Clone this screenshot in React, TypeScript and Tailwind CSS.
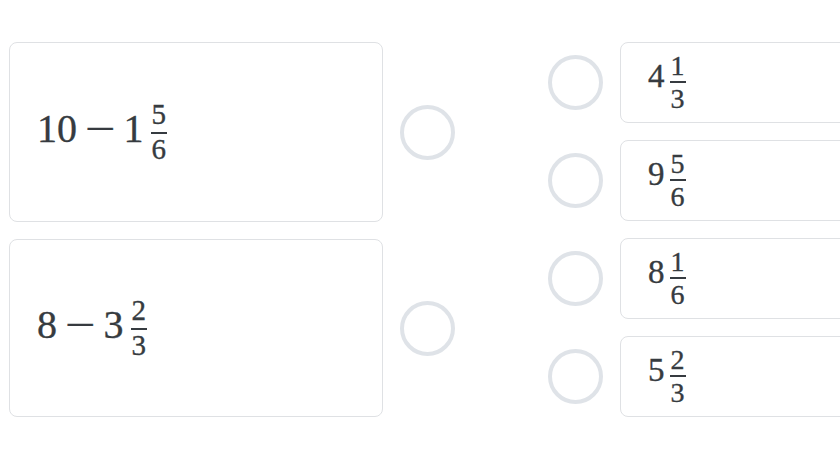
import React from "react";

const serifCls = "font-['Liberation_Serif','DejaVu_Serif',serif] [-webkit-text-stroke:0.35px_#363b40]";

function Frac({ n, d, size, numPad, denPad }: { n: string; d: string; size: string; numPad: string; denPad: string }) {
  return (
    <span className={`inline-flex flex-col items-stretch ${size} leading-none`}>
      <span className={`block text-center px-[1px] ${numPad}`}>{n}</span>
      <span className="block h-[1.5px] bg-[#363b40]" />
      <span className={`block text-center px-[1px] ${denPad}`}>{d}</span>
    </span>
  );
}

function Circle() {
  return <div className="w-[55px] h-[55px] shrink-0 rounded-full border-[4.5px] border-[#dfe3e8] bg-white" />;
}

function LeftBox({ a, b, n, d, h }: { a: string; b: string; n: string; d: string; h: string }) {
  return (
    <div className="flex items-center">
      <div className={`w-[374px] ${h} rounded-lg border-[1.5px] border-[#dfe1e4] flex items-center pl-[27px] text-[#363b40] ${serifCls}`}>
        <span className="text-[40px] leading-none mb-[7px]">{a}</span>
        <span className="inline-block text-[40px] leading-none mb-[7px] ml-[12px] mr-[12px] scale-x-[1.35]">−</span>
        <span className="text-[40px] leading-none mb-[7px]">{b}</span>
        <span className="ml-[7px]">
          <Frac n={n} d={d} size="text-[29px]" numPad="pb-[3px]" denPad="pt-[1px]" />
        </span>
      </div>
      <div className="ml-[17px]">
        <Circle />
      </div>
    </div>
  );
}

function RightBox({ w, n, d }: { w: string; n: string; d: string }) {
  return (
    <div className="flex items-center">
      <Circle />
      <div className={`ml-[17px] w-[300px] h-[81px] rounded-lg border-[1.5px] border-[#dfe1e4] flex items-center pl-[27px] text-[#363b40] ${serifCls}`}>
        <span className="text-[33px] leading-none mb-[12px]">{w}</span>
        <span className="ml-[5px]">
          <Frac n={n} d={d} size="text-[28px]" numPad="pb-[1px]" denPad="pt-[2px]" />
        </span>
      </div>
    </div>
  );
}

export default function App() {
  return (
    <div className="w-[840px] h-[452px] overflow-hidden bg-white">
      <div className="flex pt-[42px] pl-[9px]">
        <div className="flex flex-col gap-[17px]">
          <LeftBox a="10" b="1" n="5" d="6" h="h-[180px]" />
          <LeftBox a="8" b="3" n="2" d="3" h="h-[178px]" />
        </div>
        <div className="ml-[93px] flex flex-col gap-[17px]">
          <RightBox w="4" n="1" d="3" />
          <RightBox w="9" n="5" d="6" />
          <RightBox w="8" n="1" d="6" />
          <RightBox w="5" n="2" d="3" />
        </div>
      </div>
    </div>
  );
}
